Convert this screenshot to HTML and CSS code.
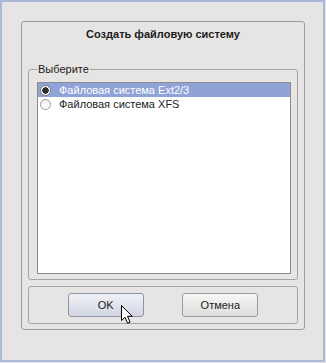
FILE: index.html
```html
<!DOCTYPE html>
<html lang="ru">
<head>
    <meta charset="UTF-8">
    <meta name="viewport" content="width=device-width, initial-scale=1.0">
    <title>Создать файловую систему</title>
    <link rel="stylesheet" href="styles.css">
</head>
<body>
    <div class="window">
        <div class="frame">
            <h1 class="title">Создать файловую систему</h1>

            <fieldset class="group">
                <legend>Выберите</legend>
                <div class="list">
                    <div class="row selected">
                        <span class="radio checked"></span>
                        <span>Файловая система Ext2/3</span>
                    </div>
                    <div class="row">
                        <span class="radio"></span>
                        <span>Файловая система XFS</span>
                    </div>
                </div>
            </fieldset>

            <div class="buttons">
                <button class="btn focused">OK</button>
                <button class="btn">Отмена</button>
            </div>
        </div>

        <svg class="cursor" width="13" height="20" viewBox="0 0 13 20">
            <path d="M0.5 0.5 L0.5 15.5 L4 12.2 L6.6 18.3 L9 17.2 L6.5 11.3 L11.2 11.3 Z" fill="#fff" stroke="#000" stroke-width="1" stroke-linejoin="round"/>
        </svg>
    </div>
</body>
</html>
```

FILE: styles.css
```css
body {
    margin: 0;
    background-color: #e5e4e2;
    font-family: "Liberation Sans", Arial, sans-serif;
    font-size: 11px;
    color: #1c1c1c;
}

.window {
    position: relative;
    box-sizing: border-box;
    width: 325px;
    height: 362px;
    padding: 19px 0 0 19px;
    border: 2px solid #aab9da;
    background-color: #e6e5e3;
}

.frame {
    box-sizing: border-box;
    display: flex;
    flex-direction: column;
    width: 284px;
    height: 309px;
    padding: 0 6px 5px 6px;
    border: 1px solid #9e9e9c;
    border-radius: 3px;
}

.title {
    margin: 4px 0 21px;
    font-size: 11px;
    font-weight: bold;
    line-height: 16px;
    text-align: center;
}

.group {
    margin: 0;
    padding: 7px 6px 5px 8px;
    border: 1px solid #a4a4a2;
    border-radius: 3px;
}

.group legend {
    margin-left: 0;
    padding: 0 1px;
    line-height: 12px;
}

.list {
    box-sizing: border-box;
    height: 192px;
    border: 1px solid #8d8d8d;
    background: #fff;
}

.row {
    display: flex;
    align-items: center;
    gap: 8px;
    height: 14px;
    padding-left: 2px;
}

.row.selected {
    background-color: #8fa3d8;
    color: #fff;
}

.radio {
    box-sizing: border-box;
    width: 11px;
    height: 11px;
    border: 1px solid #9a9a9a;
    border-radius: 50%;
    background: linear-gradient(#f2f2f2, #fff);
}

.radio.checked {
    border-color: #7d7d7d;
    background: radial-gradient(circle, #2e2e2e 0, #2e2e2e 3px, #fff 3.5px);
}

.buttons {
    display: flex;
    justify-content: space-evenly;
    margin-top: 6px;
    padding: 6px 0;
    border: 1px solid #a4a4a2;
    border-radius: 3px;
}

.btn {
    box-sizing: border-box;
    width: 76px;
    height: 24px;
    padding: 0;
    font-family: inherit;
    font-size: 11px;
    font-weight: normal;
    color: #1c1c1c;
    border: 1px solid #9c9c9c;
    border-radius: 3px;
    background: linear-gradient(#f6f6f5, #dededc);
}

.btn.focused {
    border-color: #8c93a8;
    background: linear-gradient(#f1f2f6, #d2d5e2);
}

.cursor {
    position: absolute;
    left: 119px;
    top: 303px;
}
```
